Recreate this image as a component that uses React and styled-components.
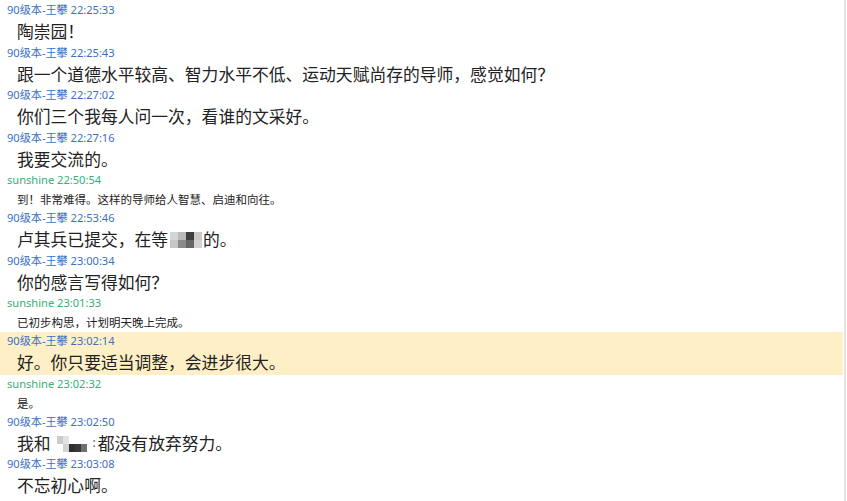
import React from "react";
import styled, { createGlobalStyle } from "styled-components";

const GlobalStyle = createGlobalStyle`
  html, body {
    margin: 0;
    padding: 0;
    background: #ffffff;
  }
  body {
    width: 847px;
    height: 501px;
    overflow: hidden;
    font-family: "Noto Sans", "Noto Sans CJK SC", sans-serif;
  }
`;

const Window = styled.div`
  display: flex;
  width: 847px;
  height: 501px;
  background: #ffffff;
`;

const Log = styled.div`
  display: flex;
  flex-direction: column;
  width: 843px;
  padding-top: 1px;
`;

const ScrollEdge = styled.div`
  width: 2px;
  margin-left: 1px;
  background: #e4e4e4;
`;

const Entry = styled.div`
  display: flex;
  flex-direction: column;
  background: ${(p) => (p.$active ? "#feefc6" : "transparent")};
`;

const Header = styled.div`
  height: 18px;
  line-height: 18px;
  padding-left: 7px;
  font-size: 11.1px;
  color: ${(p) => (p.$self ? "#35b078" : "#3a6fc6")};
  white-space: nowrap;
`;

const Body = styled.div`
  display: flex;
  align-items: center;
  padding-left: 17px;
  height: ${(p) => (p.$small ? "20px" : "24.5px")};
  font-family: "Noto Sans CJK SC", sans-serif;
  font-size: ${(p) => (p.$small ? "11.5px" : "16.8px")};
  color: #222222;
  white-space: nowrap;
`;

const Mosaic = styled.span`
  display: flex;
  flex-wrap: wrap;
  flex-shrink: 0;
  width: ${(p) => p.$w}px;
  margin: ${(p) => p.$margin};
`;

const Cell = styled.span`
  width: ${(p) => p.$size}px;
  height: 8px;
  background: ${(p) => p.$c};
`;

const Remnant = styled.span`
  font-family: "Noto Sans", sans-serif;
  font-size: 12px;
  color: #555;
  margin: 0 2px 0 1px;
`;

const mosaicA = [
  "#d4d4d4", "#b9b9b9", "#3f3f3f", "#c9c9c9",
  "#c6c6c6", "#8a8a8a", "#666666", "#d2d2d2",
];

const mosaicB = [
  "#cccccc", "#e2e2e2", "#ffffff", "#ffffff", "#ffffff",
  "#ffffff", "#d2d2d2", "#2f2f2f", "#3a3a3a", "#707070",
];

const U = "90级本-王攀";
const S = "sunshine";

const messages = [
  { who: U, t: "22:25:33", text: "陶崇园！" },
  { who: U, t: "22:25:43", text: "跟一个道德水平较高、智力水平不低、运动天赋尚存的导师，感觉如何？" },
  { who: U, t: "22:27:02", text: "你们三个我每人问一次，看谁的文采好。" },
  { who: U, t: "22:27:16", text: "我要交流的。" },
  { who: S, t: "22:50:54", text: "到！非常难得。这样的导师给人智慧、启迪和向往。", small: true },
  { who: U, t: "22:53:46", text: "卢其兵已提交，在等", after: "的。", mosaic: "a" },
  { who: U, t: "23:00:34", text: "你的感言写得如何？" },
  { who: S, t: "23:01:33", text: "已初步构思，计划明天晚上完成。", small: true },
  { who: U, t: "23:02:14", text: "好。你只要适当调整，会进步很大。", active: true },
  { who: S, t: "23:02:32", text: "是。", small: true },
  { who: U, t: "23:02:50", text: "我和", after: "都没有放弃努力。", mosaic: "b" },
  { who: U, t: "23:03:08", text: "不忘初心啊。" },
];

function Blur({ kind }) {
  if (kind === "a") {
    return (
      <Mosaic $w={32} $margin="1px 1px 0 2px">
        {mosaicA.map((c, i) => (
          <Cell key={i} $c={c} $size={8} />
        ))}
      </Mosaic>
    );
  }
  return (
    <>
      <Mosaic $w={30} $margin="2px 5px 0 6px">
        {mosaicB.map((c, i) => (
          <Cell key={i} $c={c} $size={6} />
        ))}
      </Mosaic>
      <Remnant>:</Remnant>
    </>
  );
}

export default function App() {
  return (
    <>
      <GlobalStyle />
      <Window>
        <Log>
          {messages.map((m, i) => (
            <Entry key={i} $active={m.active}>
              <Header $self={m.who === S}>
                {m.who} {m.t}
              </Header>
              <Body $small={m.small}>
                {m.text}
                {m.mosaic && <Blur kind={m.mosaic} />}
                {m.after}
              </Body>
            </Entry>
          ))}
        </Log>
        <ScrollEdge />
      </Window>
    </>
  );
}
